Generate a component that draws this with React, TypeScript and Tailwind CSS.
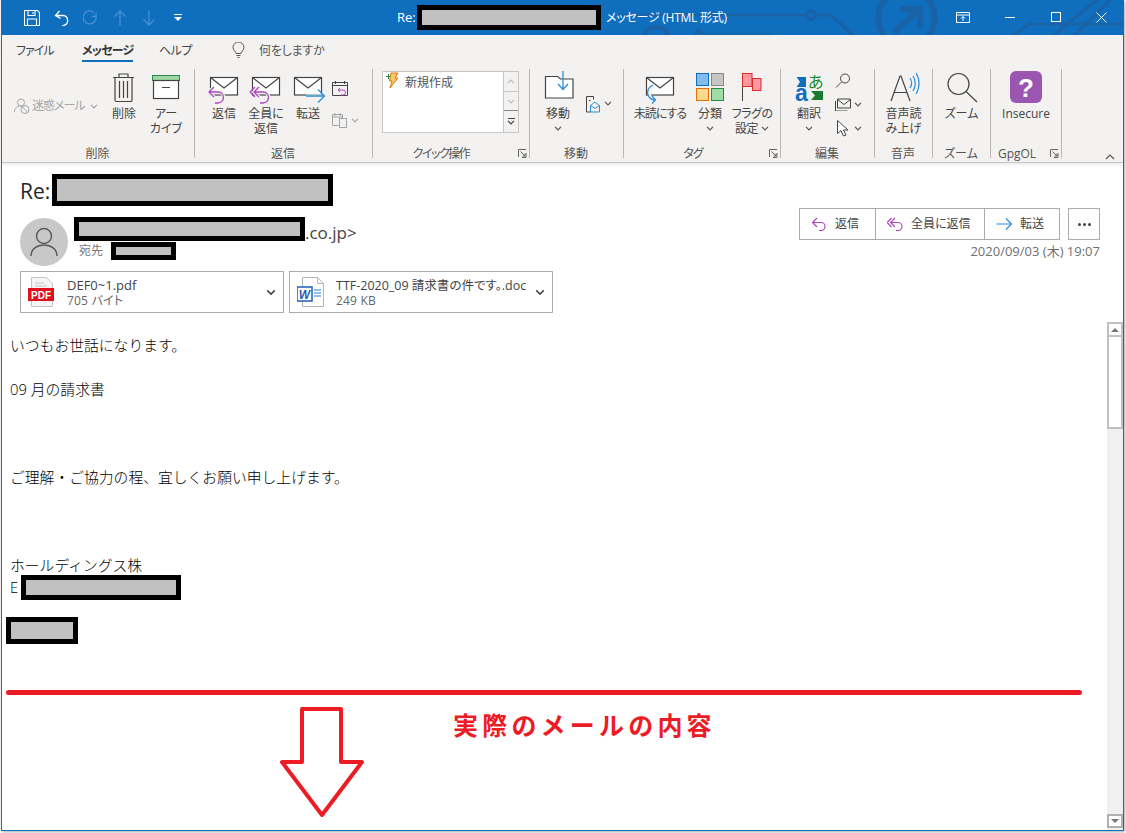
import React from 'react';

const INK = '#444444';
const PURPLE = '#b146c2';
const BLUE = '#2b8fd8';

function Redact({ className = '' }: { className?: string }) {
  return <div className={`border-[5px] border-black bg-[#c0c0c0] shrink-0 ${className}`} />;
}

function Chev({ color = '#555555', className = '' }: { color?: string; className?: string }) {
  return (
    <svg width="8" height="5" viewBox="0 0 8 5" className={`shrink-0 ${className}`} fill="none" stroke={color} strokeWidth="1.2">
      <path d="M1 .8l3 3 3-3" />
    </svg>
  );
}

function Launcher() {
  return (
    <svg width="9" height="9" viewBox="0 0 9 9" fill="none" stroke="#666666" className="absolute right-[2px] bottom-0">
      <path d="M.5 8V.5H8M8 4v4.5H4M2.5 2.5L7 7M7 4.5V7H4.5" />
    </svg>
  );
}

// white halo under the arrows so they cut the envelope outline
function Envelope({ x = 6 }: { x?: number }) {
  return (
    <g fill="#ffffff" stroke={INK} strokeWidth="1.2">
      <rect x={x + 0.5} y="6.5" width="27" height="17.5" />
      <path d={`M${x + 0.5} 6.5L${x + 14} 17l13.5-10.5`} fill="none" />
    </g>
  );
}

function ReplyArrow({ dx = 0, double = false }: { dx?: number; double?: boolean }) {
  const d = `M${dx + 10} 16l-5 5 5 5M${dx + 5} 21h9a5.5 5.5 0 0 1 0 11h-3`;
  const d2 = `M${dx + 6} 16l-5 5 5 5`;
  return (
    <g fill="none">
      <path d={d} stroke="#f3f2f1" strokeWidth="3.5" />
      <path d={d} stroke={PURPLE} strokeWidth="1.3" />
      {double && <path d={d2} stroke={PURPLE} strokeWidth="1.3" />}
    </g>
  );
}

function BigBtn({ w, lines, icon, chev, iconW = 40, textClass = '' }: { w: string; lines: string[]; icon: React.ReactNode; chev?: boolean; iconW?: number; textClass?: string }) {
  return (
    <div className={`${w} flex flex-col items-center shrink-0 pt-[2px]`}>
      <svg width={iconW} height="35" viewBox={`0 0 ${iconW} 35`} className="shrink-0 overflow-visible">
        {icon}
      </svg>
      {lines.map((l) => (
        <div key={l} className={`h-[15px] leading-[15px] whitespace-nowrap flex items-center gap-[3px] ${textClass}`}>
          {l}
          {chev && l.includes('設定') && <Chev />}
        </div>
      ))}
      {chev && lines.length === 1 && (
        <div className="h-[15px] flex items-center">
          <Chev />
        </div>
      )}
    </div>
  );
}

function Group({ w, label, launcher, labelClass = '', children }: { w: string; label: string; launcher?: boolean; labelClass?: string; children: React.ReactNode }) {
  return (
    <div className={`${w} h-[89px] shrink-0 border-r border-[#b9b8b7] flex flex-col relative`}>
      <div className="flex flex-1">{children}</div>
      <div className={`h-[10px] leading-[10px] text-center text-[12px] text-[#555555] translate-y-[1px] ${labelClass || 'pr-[1px]'}`}>{label}</div>
      {launcher && <Launcher />}
    </div>
  );
}

function TitleBar() {
  return (
    <div className="relative h-[35px] bg-[#106ebe] flex items-center text-white shrink-0 overflow-hidden">
      <svg width="1122" height="35" viewBox="1 0 1122 35" className="absolute left-0 top-0" fill="none" stroke="#1a62a6" strokeWidth="3">
        <circle cx="655" cy="40" r="13" strokeWidth="4" />
        <circle cx="698" cy="34" r="3" />
        <path d="M701 35h70M620 15h186M814 15h16l24 22" />
        <circle cx="810" cy="15" r="4" />
        <path d="M887 -4a30 30 0 0 0 0 44M924 -4a30 30 0 0 1 0 44" strokeWidth="6" />
        <path d="M893 33l25-24M899 9h20v20" strokeWidth="6" />
        <path d="M1010 37l18-13h95M1050 37l50-40M1072 37l40-40" />
      </svg>
      <div className="relative flex items-center h-full w-full">
        <svg width="16" height="16" viewBox="0 0 16 16" className="ml-[22px]" fill="none" stroke="#ffffff" strokeWidth="1.1">
          <path d="M.5.5h13l2 2v13H.5zM4 .5v5h7v-5M3.5 15.5V9h9v6.5M9 2v2" />
        </svg>
        <svg width="16" height="16" viewBox="0 0 16 16" className="ml-[14px]" fill="none" stroke="#ffffff" strokeWidth="1.3">
          <path d="M5.5 1L1.5 5.5l5 3M2 5.5h7a5 5 0 0 1 1 9.8L8 16" />
        </svg>
        <svg width="16" height="16" viewBox="0 0 16 16" className="ml-[13px]" fill="none" stroke="#4a90d2" strokeWidth="1.3">
          <path d="M13 2.5v4h-4M13 6a6.5 6.5 0 1 1-2-3.5" />
        </svg>
        <svg width="14" height="16" viewBox="0 0 14 16" className="ml-[14px]" fill="none" stroke="#4a90d2" strokeWidth="1.3">
          <path d="M7 15.5V1M1.5 6.5L7 1l5.500 5.500" />
        </svg>
        <svg width="14" height="16" viewBox="0 0 14 16" className="ml-[15px]" fill="none" stroke="#4a90d2" strokeWidth="1.3">
          <path d="M7 .5V15M1.500 9.500L7 15l5.500-5.500" />
        </svg>
        <svg width="8" height="8" viewBox="0 0 8 8" className="ml-[18px]" fill="#ffffff">
          <path d="M0 0h8v1H0zM0 3h8L4 7z" />
        </svg>
        <div className="ml-[215px] text-[13px] leading-none w-[20px]">Re:</div>
        <Redact className="w-[184px] h-[25px]" />
        <div className="ml-[5px] text-[12px] leading-none whitespace-nowrap tracking-[-0.25px]">メッセージ (HTML 形式)</div>
        <svg width="14" height="11" viewBox="0 0 14 11" className="absolute left-[954px] top-[12px]" fill="none" stroke="#ffffff">
          <path d="M.5.5h13v10H.5zM.5 3h13M7 9V4.500M5 6.500l2-2 2 2" />
        </svg>
        <div className="absolute left-[1003px] top-[17px] w-[10px] h-px bg-white" />
        <div className="absolute left-[1049px] top-[12px] w-[10px] h-[10px] border border-white" />
        <svg width="11" height="11" viewBox="0 0 11 11" className="absolute left-[1094px] top-[12px]" stroke="#ffffff">
          <path d="M.5.500l10 10M10.500.500l-10 10" />
        </svg>
      </div>
    </div>
  );
}

function TabsRow() {
  return (
    <div className="h-[27px] bg-[#f3f2f1] flex items-start text-[12px] text-[#444444] shrink-0 pl-[14px] pt-[8px]">
      <div className="leading-[16px] w-[37px] whitespace-nowrap tracking-[-1px]">ファイル</div>
      <div className="ml-[29px] w-[51px] h-[19px] leading-[16px] border-b-[2px] border-[#106ebe] font-bold whitespace-nowrap text-[#333333] tracking-[-0.8px]">メッセージ</div>
      <div className="ml-[26px] leading-[16px] w-[32px] whitespace-nowrap tracking-[-0.5px]">ヘルプ</div>
      <svg width="13" height="16" viewBox="0 0 13 16" className="ml-[41px] -mt-px" fill="none" stroke="#555555">
        <path d="M4 11.500C4 9.500 1 8.500 1 5.500a5.500 5.500 0 0 1 11 0c0 3-3 4-3 6zM4.500 13.500h4M5.500 15.500h2" />
      </svg>
      <div className="ml-[14px] leading-[16px] whitespace-nowrap text-[#555555] tracking-[-0.2px]">何をしますか</div>
    </div>
  );
}

function SmallIconGray({ children }: { children: React.ReactNode }) {
  return (
    <svg width="16" height="16" viewBox="0 0 16 16" fill="none" stroke="#a6a6a6" className="shrink-0">
      {children}
    </svg>
  );
}

function Ribbon() {
  return (
    <div className="h-[101px] bg-[#f3f2f1] border-b border-[#c8c6c4] shadow-[0_2px_3px_rgba(0,0,0,0.08)] pt-[7px] flex text-[12px] text-[#444444] shrink-0 relative">
      <Group w="w-[193px]" label="削除">
        <div className="w-[102px] pl-[12px] pt-[29px] flex items-start gap-[2px] text-[#a6a6a6] shrink-0">
          <SmallIconGray>
            <circle cx="7" cy="4.500" r="3.500" />
            <path d="M.5 14c0-4 3-6 6-6" />
            <circle cx="11" cy="11.500" r="4" />
            <path d="M8 8.500l6 6" />
          </SmallIconGray>
          <span className="leading-[16px] whitespace-nowrap tracking-[-1px]">迷惑メール</span>
          <Chev color="#a6a6a6" className="mt-[6px] ml-[3px]" />
        </div>
        <BigBtn
          w="w-[40px]"
          lines={['削除']}
          icon={
            <g fill="none" stroke={INK} strokeWidth="1.2">
              <path d="M9 6.500h21M15 6V3h9v3M11 7v22a1.500 1.500 0 0 0 1.500 1.500h14A1.500 1.500 0 0 0 28 29V7M15.500 10v17M19.500 10v17M23.500 10v17" />
            </g>
          }
        />
        <BigBtn
          w="w-[44px]"
          lines={['アー', 'カイブ']}
          icon={
            <g fill="none">
              <rect x="6.500" y="4.500" width="27" height="5" fill="#9fd8a4" stroke="#2a8a4a" />
              <rect x="7.500" y="9.500" width="25" height="18" fill="#ffffff" stroke={INK} strokeWidth="1.200" />
              <path d="M18 16.500h8" stroke={INK} transform="translate(-2 0)" />
            </g>
          }
        />
      </Group>

      <Group w="w-[178px]" label="返信">
        <div className="w-[8px] shrink-0" />
        <BigBtn w="w-[42px]" lines={['返信']} icon={<><Envelope /><ReplyArrow /></>} />
        <BigBtn w="w-[42px]" lines={['全員に', '返信']} icon={<><Envelope /><ReplyArrow dx={3} double /></>} />
        <BigBtn
          w="w-[42px]"
          lines={['転送']}
          icon={
            <>
              <Envelope />
              <path d="M18 25h18" stroke="#f3f2f1" strokeWidth="3" />
              <path d="M18 25h18M30 18.500l6.500 6.500-6.500 6.500" stroke={BLUE} strokeWidth="1.300" fill="none" />
            </>
          }
        />
        <div className="flex flex-col pl-[3px] pt-[11px]">
          <svg width="16" height="16" viewBox="0 0 16 16" fill="none" stroke={INK}>
            <path d="M.5 2.500h15v13H.5zM.5 5.500h15M3.500 1v3M12.500 1v3" />
            <path d="M8 8l-2 2 2 2M6 10h5a2.500 2.500 0 0 1 0 5H9" stroke={PURPLE} />
          </svg>
          <div className="flex items-center gap-[3px] mt-[16px]">
            <SmallIconGray>
              <path d="M.5 2.500h10v11H.5zM.5 5h10M3 1v3M8 1v3" />
              <rect x="7.500" y="6.500" width="7" height="9" fill="#f3f2f1" />
            </SmallIconGray>
            <Chev color="#a6a6a6" />
          </div>
        </div>
      </Group>

      <Group w="w-[157px]" label="クイック操作" launcher labelClass="tracking-[-1.500px] pr-[20px]">
        <div className="ml-[9px] mt-[2px] flex h-[62px] w-[137px] border border-[#c6c6c6] bg-white">
          <div className="w-[121px] relative pl-[22px] pt-[2px] leading-[18px] text-[#555555]">
            <svg width="15" height="17" viewBox="0 0 15 17" className="absolute left-[2px] top-0" fill="none">
              <path d="M1 4.500h5M3.500 2v5" stroke="#2a8a4a" />
              <path d="M6 1h7L10 6h3l-8 10 2-7H4.500z" fill="#f7c96b" stroke="#d97a10" />
            </svg>
            新規作成
          </div>
          <div className="w-[15px] border-l border-[#c6c6c6] flex flex-col bg-[#f3f2f1]">
            <div className="h-[20px] border-b border-[#c6c6c6] flex items-center justify-center">
              <Chev color="#bbbbbb" className="rotate-180" />
            </div>
            <div className="h-[19px] border-b border-[#8a8886] flex items-center justify-center">
              <Chev color="#bbbbbb" />
            </div>
            <div className="flex-1 flex flex-col items-center justify-center gap-[1px]">
              <div className="w-[7px] h-px bg-[#444444]" />
              <Chev color="#444444" />
            </div>
          </div>
        </div>
      </Group>

      <Group w="w-[94px]" label="移動">
        <div className="flex">
          <BigBtn
            w="w-[56px]"
            lines={['移動']}
            chev
            icon={
              <>
                <path d="M7.500 27V5.500h12l3 2.500h12.500V27z" fill="#ffffff" stroke={INK} strokeWidth="1.200" />
                <path d="M25 0v18M20 13l5 5.500 5-5.500" stroke={BLUE} strokeWidth="1.300" fill="none" />
              </>
            }
          />
          <div className="flex items-start gap-[4px] pt-[27px]">
            <svg width="14" height="17" viewBox="0 0 14 17" fill="none">
              <path d="M.5 16V.5h7v3M.5 16h4" stroke={INK} />
              <path d="M3 4.500h1.500" stroke={INK} />
              <path d="M4.500 9.500L9 6l4.500 3.500v6.500h-9zM4.500 9.500L9 12.500l4.500-3" stroke={BLUE} />
            </svg>
            <Chev className="mt-[5px]" />
          </div>
        </div>
      </Group>

      <Group w="w-[157px]" label="タグ" launcher labelClass="tracking-[-1px] pr-[18px]">
        <BigBtn
          w="w-[72px]"
          lines={['未読にする']}
          textClass="tracking-[-1px]"
          icon={
            <>
              <Envelope />
              <path d="M14 15a6.500 6.500 0 0 0-2 3c-3 2-4 7 0 11h3M11 26l4 3-4 3" stroke="#f3f2f1" strokeWidth="3" fill="none" />
              <path d="M13 14c-6 3-7 9-3 13 1 1 3 2 5 2M12 25l3.500 4-3.500 3.500" stroke={BLUE} strokeWidth="1.300" fill="none" />
            </>
          }
        />
        <BigBtn
          w="w-[28px]"
          iconW={28}
          lines={['分類']}
          chev
          icon={
            <g>
              <rect x=".5" y="2.500" width="12" height="12" fill="#83bcec" stroke="#106ebe" />
              <rect x="15.500" y="2.500" width="12" height="12" fill="#c8c6c4" stroke="#8a8886" />
              <rect x=".5" y="17.500" width="12" height="12" fill="#fad98f" stroke="#e07000" />
              <rect x="15.500" y="17.500" width="12" height="12" fill="#a0dca8" stroke="#218c45" />
            </g>
          }
        />
        <BigBtn
          w="w-[56px]"
          lines={['フラグの', '設定']}
          chev
          textClass="tracking-[-0.5px]"
          icon={
            <g fill="#ff9aa0" stroke="#d92b2b">
              <path d="M10.500 2v28" stroke="#444444" fill="none" />
              <rect x="10.500" y="2.500" width="9.500" height="13" />
              <rect x="20.500" y="7.500" width="8.500" height="12" />
            </g>
          }
        />
      </Group>

      <Group w="w-[94px]" label="編集">
        <BigBtn
          w="w-[56px]"
          lines={['翻訳']}
          chev
          icon={
            <g>
              <text x="19" y="17" fontSize="16" fill="#1a8a2e" fontFamily="'Noto Sans CJK JP',sans-serif">あ</text>
              <text x="6" y="30" fontSize="23" fill="#106ebe" fontWeight="700" fontFamily="'Liberation Sans',sans-serif">a</text>
              <path d="M17 6v10H7.500l3.500-5-3.500-5z" fill="#106ebe" />
              <path d="M22 29l4-4.500-4-4.500h12v9z" fill="#1a7a2e" />
            </g>
          }
        />
        <div className="flex flex-col pt-[4px] w-[36px] -ml-[2px]">
          <svg width="16" height="15" viewBox="0 0 16 15" fill="none" stroke={INK}>
            <circle cx="10" cy="5.500" r="4.500" />
            <path d="M6.500 9L1 14.500" />
          </svg>
          <div className="flex items-center gap-[3px] mt-[10px]">
            <svg width="16" height="13" viewBox="0 0 16 13" fill="none" stroke={INK}>
              <path d="M.5 2.500v10h12M2.500 9.500V.5h13v9zM2.500 1l6.500 5 6.500-5" transform="translate(0 .5)" />
            </svg>
            <Chev />
          </div>
          <div className="flex items-center gap-[3px] mt-[9px]">
            <svg width="16" height="17" viewBox="0 0 16 17" fill="#ffffff" stroke={INK}>
              <path d="M2.500.5v13l3.500-3 2.500 5.500 2.500-1-2.500-5h4.500z" />
            </svg>
            <Chev />
          </div>
        </div>
      </Group>

      <Group w="w-[58px]" label="音声">
        <BigBtn
          w="w-[57px]"
          lines={['音声読', 'み上げ']}
          icon={
            <g fill="none">
              <path d="M7 30L16 5h1l9 25M10 21.500h13" stroke={INK} strokeWidth="1.200" />
              <path d="M26 7c2 3 2 7 0 10M29 5c3 4 3 11 0 15M32 2c4 6 4 15 0 21" stroke={BLUE} strokeWidth="1.200" />
            </g>
          }
        />
      </Group>

      <Group w="w-[58px]" label="ズーム">
        <BigBtn
          w="w-[57px]"
          lines={['ズーム']}
          icon={
            <g fill="none" stroke={INK} strokeWidth="1.200">
              <circle cx="16.500" cy="13" r="10.500" />
              <path d="M24 20.500L35 31" />
            </g>
          }
        />
      </Group>

      <Group w="w-[71px]" label="GpgOL" launcher labelClass="pr-[18px]">
        <BigBtn
          w="w-[70px]"
          lines={['Insecure']}
          icon={
            <g>
              <rect x="4" y="0" width="32" height="32" rx="6" fill="#9a56b0" />
              <text x="20" y="26" fontSize="26" fontWeight="700" textAnchor="middle" fill="#ffffff" fontFamily="'Liberation Sans',sans-serif">?</text>
            </g>
          }
        />
      </Group>

      <svg width="10" height="6" viewBox="0 0 10 6" fill="none" stroke="#555555" strokeWidth="1.200" className="absolute left-[1103px] bottom-[2px]">
        <path d="M1 5l4-4 4 4" />
      </svg>
    </div>
  );
}

function ActionBtn({ label, icon, w }: { label: string; icon: React.ReactNode; w: string }) {
  return (
    <div className={`${w} h-full flex items-center pl-[11px] gap-[8px] border-r border-[#ababab] last:border-r-0`}>
      <svg width="16" height="14" viewBox="0 0 16 14" fill="none" strokeWidth="1.200" className="shrink-0">
        {icon}
      </svg>
      <span className="whitespace-nowrap text-[#444444]">{label}</span>
    </div>
  );
}

function MessageHeader() {
  return (
    <div className="shrink-0 bg-white text-[12px]">
      <div className="h-[32px] mt-[11px] pl-[18px] flex items-center">
        <span className="text-[21px] leading-none text-[#262626] w-[32px] pt-[3px]">Re:</span>
        <Redact className="w-[281px] h-[32px]" />
      </div>

      <div className="h-[59px] flex pl-[18px] pr-[23px]">
        <div className="mt-[12px] w-[48px] h-[48px] rounded-full bg-[#c8c8c8] flex items-center justify-center shrink-0">
          <svg width="28" height="32" viewBox="0 0 28 32" fill="none" stroke="#5c5c5c" strokeWidth="1.500">
            <circle cx="14" cy="10" r="7.500" />
            <path d="M1 30c0-7 6-11 13-11s13 4 13 11" />
          </svg>
        </div>
        <div className="ml-[6px] mt-[11px] flex flex-col">
          <div className="flex items-center h-[24px]">
            <Redact className="w-[231px] h-[24px]" />
            <span className="text-[17px] leading-none text-[#444444] whitespace-nowrap pt-[6px]">.co.jp&gt;</span>
          </div>
          <div className="flex items-center h-[18px] mt-[1px]">
            <span className="ml-[5px] w-[32px] text-[#7a7a7a]">宛先</span>
            <Redact className="w-[65px] h-[18px]" />
          </div>
        </div>
        <div className="ml-auto mt-[2px] flex flex-col items-end">
          <div className="flex h-[32px]">
            <div className="flex h-full border border-[#ababab]">
              <ActionBtn
                w="w-[76px]"
                label="返信"
                icon={<path d="M6 1L1.500 5.500 6 10M1.500 5.500H10a3.800 3.800 0 0 1 0 8H8" stroke={PURPLE} />}
              />
              <ActionBtn
                w="w-[109px]"
                label="全員に返信"
                icon={<path d="M8 1L3.500 5.500 8 10M4.500 1L0 5.500 4.500 10M3.500 5.500H11a3.800 3.800 0 0 1 0 8H9" stroke={PURPLE} />}
              />
              <ActionBtn
                w="w-[74px]"
                label="転送"
                icon={<path d="M.5 7h15M10 1.500L15.500 7 10 12.500" stroke={BLUE} />}
              />
            </div>
            <div className="ml-[8px] w-[32px] border border-[#ababab] flex items-center justify-center gap-[2px]">
              <span className="w-[3px] h-[3px] rounded-full bg-[#444444]" />
              <span className="w-[3px] h-[3px] rounded-full bg-[#444444]" />
              <span className="w-[3px] h-[3px] rounded-full bg-[#444444]" />
            </div>
          </div>
          <div className="mt-[3px] leading-[16px] text-[13px] text-[#707070] whitespace-nowrap [font-feature-settings:normal]">2020/09/03 (木) 19:07</div>
        </div>
      </div>

      <div className="mt-[6px] ml-[18px] flex gap-[5px]">
        <Attachment
          name="DEF0~1.pdf"
          nameClass="text-[13px]"
          size="705 バイト"
          icon={
            <svg width="27" height="32" viewBox="0 0 27 32" className="shrink-0">
              <path d="M3.500 1.500h15l6 6v23h-21z" fill="#f5f5f5" stroke="#c4c4c4" />
              <path d="M7 7h9M7 10h12" stroke="#c4c4c4" />
              <rect x="0" y="12" width="26" height="13" fill="#e2101f" />
              <text x="13" y="22.500" fontSize="10" fontWeight="700" textAnchor="middle" fill="#ffffff" fontFamily="'Liberation Sans',sans-serif">PDF</text>
            </svg>
          }
        />
        <Attachment
          name="TTF-2020_09 請求書の件です。.doc"
          nameClass="text-[12.5px]"
          size="249 KB"
          icon={
            <svg width="28" height="32" viewBox="0 0 28 32" className="shrink-0">
              <path d="M5.500 1.500h15l6 6v23h-21z" fill="#ffffff" stroke="#b5b5b5" />
              <path d="M20.500 1.500v6h6" fill="none" stroke="#b5b5b5" />
              <path d="M17 14h7M17 17h7M17 20h7" stroke="#2b7cd3" />
              <rect x="0" y="11" width="15" height="14" fill="#ffffff" stroke="#1e5fb4" strokeWidth="1.500" />
              <text x="7.500" y="22.500" fontSize="12" fontWeight="700" fontStyle="italic" textAnchor="middle" fill="#1e5fb4" fontFamily="'Liberation Sans',sans-serif">W</text>
            </svg>
          }
        />
      </div>
    </div>
  );
}

function Attachment({ name, nameClass, size, icon }: { name: string; nameClass: string; size: string; icon: React.ReactNode }) {
  return (
    <div className="w-[264px] h-[42px] border border-[#ababab] flex items-center pl-[7px] pr-[8px] shrink-0">
      <div className="w-[39px] shrink-0">{icon}</div>
      <div className="flex-1 min-w-0 leading-[15px] mt-[1px]">
        <div className={`text-[#444444] whitespace-nowrap ${nameClass}`}>{name}</div>
        <div className="text-[#666666] whitespace-nowrap tracking-[0.2px]">{size}</div>
      </div>
      <Chev color="#444444" className="scale-125" />
    </div>
  );
}

function Line({ children }: { children?: React.ReactNode }) {
  return <div className="h-[22px] leading-[22px] whitespace-nowrap">{children}</div>;
}

function MessageBody() {
  return (
    <div className="flex-1 min-h-0 flex mt-[9px] bg-white">
      <div className="flex-1 min-w-0 pl-[8px] pt-[12px] text-[14.8px] font-light text-black [font-feature-settings:normal]">
        <Line>いつもお世話になります。</Line>
        <Line />
        <Line>09 月の請求書</Line>
        <Line />
        <Line />
        <Line />
        <Line>ご理解・ご協力の程、宜しくお願い申し上げます。</Line>
        <Line />
        <Line />
        <Line />
        <Line>ホールディングス株</Line>
        <div className="h-[22px] flex items-center">
          <span className="w-[11px]">E</span>
          <Redact className="w-[160px] h-[25px]" />
        </div>
        <Redact className="w-[72px] h-[27px] mt-[19px] -ml-[4px]" />
        <div className="w-[1076px] h-[5px] rounded-full bg-[#ed1c24] mt-[46px] -ml-[4px]" />
        <div className="flex mt-[11px]">
          <svg width="86" height="114" viewBox="0 0 86 114" fill="none" stroke="#ed1c24" strokeWidth="4" strokeLinejoin="round" className="ml-[269px] shrink-0">
            <path d="M23 3h39v53h21L43 109 3 56h20z" />
          </svg>
          <div className="ml-[88px] mt-[5px] text-[25px] leading-[28px] font-bold tracking-[4.200px] text-[#ed1c24] whitespace-nowrap">実際のメールの内容</div>
        </div>
      </div>

      <div className="w-[16px] shrink-0 flex flex-col bg-[#f0f0f0]">
        <div className="h-[15px] border-2 border-[#c0c0c0] bg-white flex items-center justify-center shrink-0">
          <div className="w-0 h-0 border-x-[4px] border-x-transparent border-b-[4px] border-b-[#767676]" />
        </div>
        <div className="h-[92px] border-2 border-t-0 border-[#c0c0c0] bg-white shrink-0" />
        <div className="flex-1" />
        <div className="h-[14px] border-2 border-[#b0b0b0] bg-white flex items-center justify-center shrink-0 mb-[2px]">
          <div className="w-0 h-0 border-x-[4px] border-x-transparent border-t-[4px] border-t-[#767676]" />
        </div>
      </div>
    </div>
  );
}

export default function App() {
  return (
    <div className="w-[1126px] h-[833px] bg-white overflow-hidden pl-[1px] [font-family:'Open_Sans','Noto_Sans_CJK_JP',sans-serif] [font-feature-settings:'palt']">
      <div className="w-[1123px] h-[831px] border-x border-b border-[#106ebe] flex flex-col shadow-[1px_1px_3px_rgba(0,0,0,0.35)] overflow-hidden">
        <TitleBar />
        <TabsRow />
        <Ribbon />
        <MessageHeader />
        <MessageBody />
      </div>
    </div>
  );
}
